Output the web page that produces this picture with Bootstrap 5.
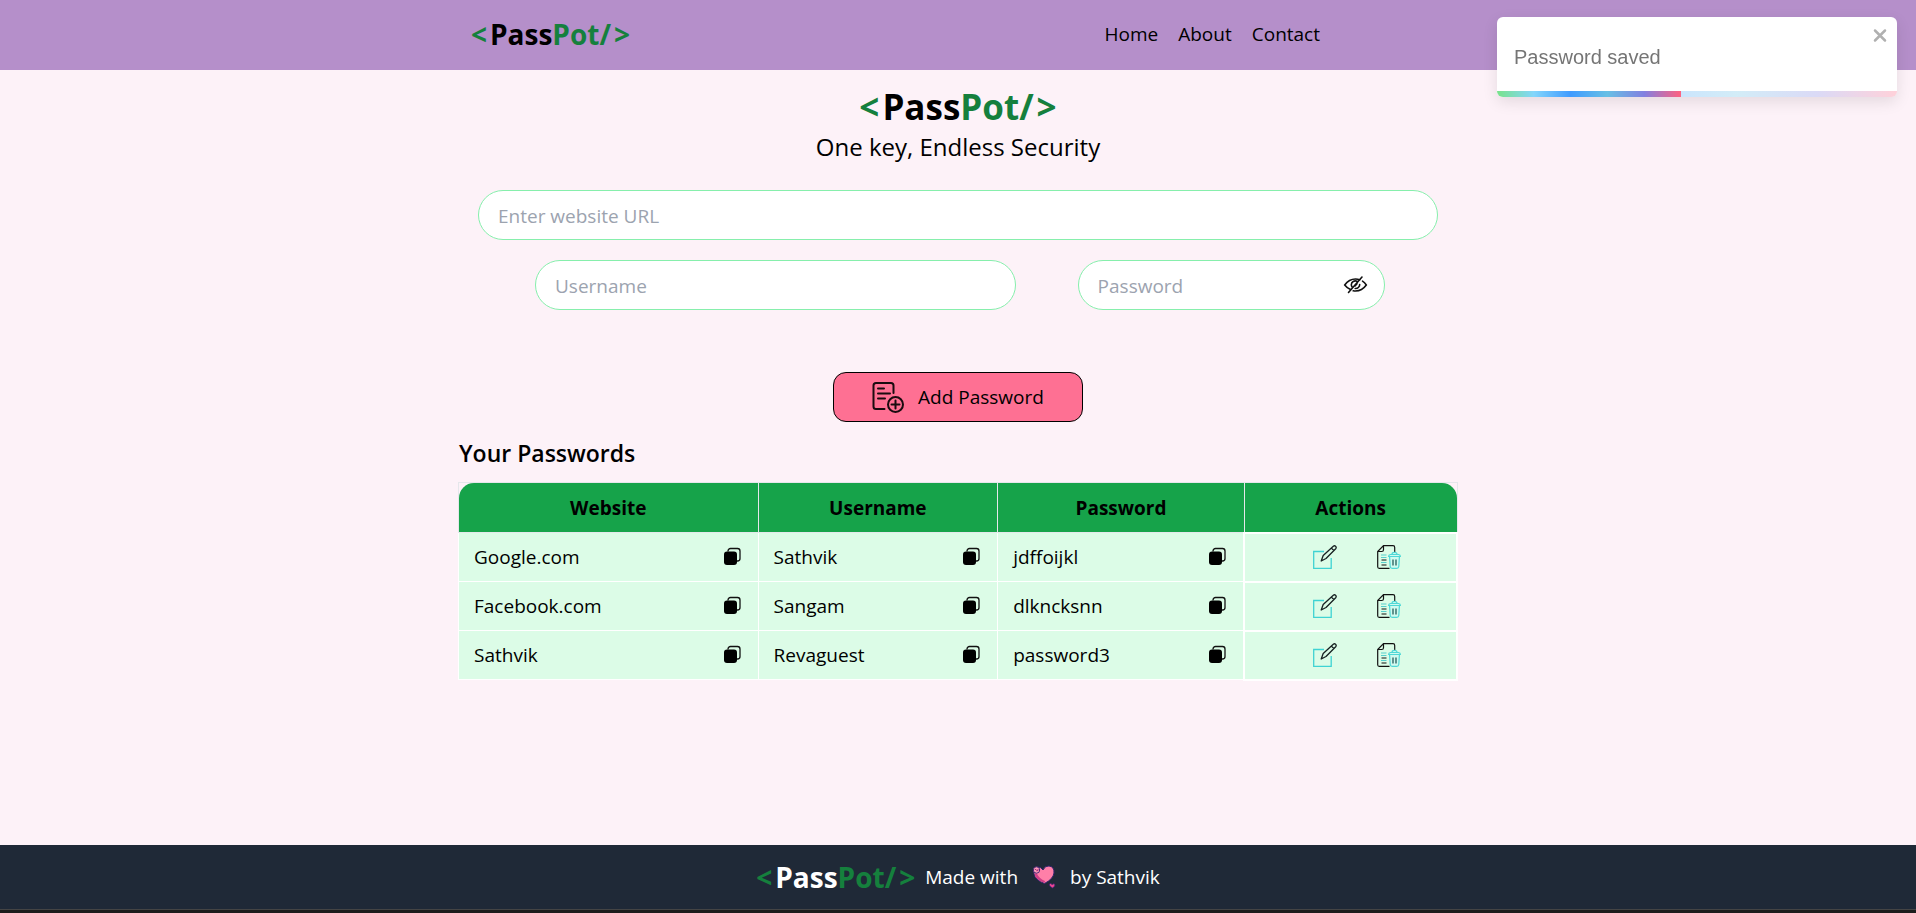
<!DOCTYPE html>
<html lang="en">
<head>
<meta charset="utf-8">
<meta name="viewport" content="width=device-width, initial-scale=1">
<title>PassPot</title>
<link href="https://cdn.jsdelivr.net/npm/bootstrap@5.3.0/dist/css/bootstrap.min.css" rel="stylesheet">
<style>
  body { font-family: "Open Sans", "Noto Sans", sans-serif; font-size: 19px; line-height: 30px; color: #000; background: #fdf2f8; }
  .page-width { width: 100%; max-width: 1000px; margin: 0 auto; }
  .site-nav { background: #b58fca; min-height: 70px; padding-bottom: 2px; }
  .site-nav .page-width { padding: 0 138px 0 13px; }
  .site-nav a { color: #000; text-decoration: none; }
  .nav-links { gap: 20px; }
  .brand { font-size: 28px; line-height: 40px; font-weight: 700; }
  .brand-green { color: #15803d; }
  .tag-open { color: #15803d; margin-right: 3px; }
  .tag-close { color: #15803d; margin-left: 3px; }
  .hero-title { font-size: 35px; line-height: 45px; font-weight: 700; margin: 14px 0 0; }
  .tagline { font-size: 24px; line-height: 35px; margin: 0 0 26px; }
  .entry-form { padding: 0 20px; }
  .pill { height: 50px; border: 1px solid #86efac; border-radius: 25px; padding: 2px 19px 0; font-size: 19px; color: #000; background: #fff; }
  .pill::placeholder { color: #9ca3af; }
  .pair { gap: 62px; padding: 0 53px 0 57px; margin-top: 20px; }
  .user-field { flex: 480 1 0; }
  .pass-field { flex: 307 1 0; }
  .eye-btn { right: 17px; top: 12px; }
  .bare-btn { border: 0; background: none; padding: 0; display: flex; color: #000; }
  .add-btn { width: 250px; height: 50px; margin-top: 62px; gap: 14px; border: 1px solid #000; border-radius: 13px; background: #fe7093; color: #000; }
  .list-title { font-size: 23px; line-height: 35px; font-weight: 600; margin: 14px 0 11px; padding-left: 1px; }
  .vault { width: 100%; table-layout: fixed; border-collapse: collapse; }
  .vault th { height: 50px; padding-top: 2px; text-align: center; font-weight: 700; background: #16a34a; border: 1px solid #e5e7eb; }
  .vault th:first-child { border-top-left-radius: 15px; }
  .vault th:last-child { border-top-right-radius: 15px; }
  .vault td { height: 49px; padding: 0 16px 0 15px; background: #dcfce7; border: 1px solid #fff; }
  .vault td.act { border: 2px solid #fff; }
  .w-site { width: 30%; } .w-user { width: 24%; } .w-pass { width: 24.7%; }
  .act-icons { gap: 40px; padding-left: 14px; }
  .site-footer { background: #1f2937; color: #fff; height: 64px; gap: 10px; }
  .bottom-strip { height: 4px; background: #1c1c1c; border-top: 1px solid #444; }
  .notice { top: 17px; right: 19px; width: 400px; height: 80px; border-radius: 6px; background: #fff; overflow: hidden; color: #757575; font-family: "Liberation Sans", Arial, sans-serif; font-size: 20px; box-shadow: 0 5px 15px rgba(0,0,0,.1); }
  .notice-text { padding: 24px 17px 0; line-height: 32px; }
  .notice-close { top: 10px; right: 10px; color: #b0b0b0; }
  .timer-track, .timer-bar { height: 6px; left: 0; bottom: 0; background: linear-gradient(to right, #4cd964, #5ac8fa, #007aff, #34aadc, #5856d6, #ff2d55); }
  .timer-track { width: 100%; opacity: .22; }
  .timer-base { height: 6px; left: 0; bottom: 0; background: #fff; }
  .timer-bar { opacity: .75; }
</style>
</head>
<body class="d-flex flex-column min-vh-100">

<svg class="d-none" aria-hidden="true">
  <symbol id="i-copy" viewBox="0 0 20 20">
    <path d="M6 4.500V4a2.500 2.500 0 0 1 2.500-2.500h7A2.500 2.500 0 0 1 18 4v7.500a2.500 2.500 0 0 1-2.500 2.500H15" fill="none" stroke="#111" stroke-width="1.300"/>
    <rect x="2" y="4.500" width="13" height="13.500" rx="3" fill="#000"/>
  </symbol>
  <symbol id="i-edit" viewBox="0 0 24 24">
    <path d="M11 6.500H.700v17h17.500V13" fill="none" stroke="#3fd3d3" stroke-width="1.300"/>
    <path d="M8.200 16l2-5.500L20.300 1.200q1.300-1 2.400.2 1 1.200 0 2.300L13 13.500 8.200 16zM18.300 3l2.600 2.600" fill="none" stroke="#162021" stroke-width="1.300" stroke-linejoin="round"/>
  </symbol>
  <symbol id="i-trash" viewBox="0 0 24 24">
    <path d="M12.500 23.300H2.200Q.700 23.300.700 21.800V6.500L6.500.700H16q1.700 0 1.700 1.700v5M.700 6.500h4q1.800 0 1.800-1.800v-4M4.500 15h5M4.500 20h5" fill="none" stroke="#111" stroke-width="1.200"/>
    <path d="M4 10h5.500M4 12.500h5.500M4 17.500h5.500" stroke="#57cfcc" stroke-width="1.100"/>
    <path d="M11.600 11.500q0-1.800 1.800-2h8.200q1.800.2 1.800 2zM15 9.300q0-2 2.500-2t2.500 2M12.600 12l.6 9.500q.2 1.800 2 1.800h4.600q1.800 0 2-1.800l.6-9.500" fill="#d0faef" stroke="#4fd8d6" stroke-width="1.200"/>
    <path d="M16 14.500v6M19 14.500v6" stroke="#174f4e" stroke-width="1.200"/>
  </symbol>
</svg>

<nav class="site-nav d-flex align-items-center">
  <div class="page-width d-flex justify-content-between align-items-center">
    <a class="brand" href="#"><span class="tag-open">&lt;</span>Pass<span class="brand-green">Pot/</span><span class="tag-close">&gt;</span></a>
    <ul class="nav-links list-unstyled d-flex mb-0">
      <li><a href="#">Home</a></li>
      <li><a href="#">About</a></li>
      <li><a href="#">Contact</a></li>
    </ul>
  </div>
</nav>

<main class="page-width flex-grow-1">
  <h1 class="hero-title text-center"><span class="tag-open">&lt;</span>Pass<span class="brand-green">Pot/</span><span class="tag-close">&gt;</span></h1>
  <p class="tagline text-center">One key, Endless Security</p>

  <form class="entry-form" onsubmit="return false">
    <input class="pill w-100" type="text" placeholder="Enter website URL" aria-label="Website URL">
    <div class="pair d-flex">
      <div class="user-field"><input class="pill w-100" type="text" placeholder="Username" aria-label="Username"></div>
      <div class="pass-field position-relative">
        <input class="pill w-100" type="password" placeholder="Password" aria-label="Password">
        <button class="bare-btn eye-btn position-absolute" type="button" aria-label="Show password">
          <svg width="25" height="25" viewBox="0 0 25 25" fill="none" stroke="#111" stroke-width="1.600" stroke-linecap="round">
            <path d="M7.500 17.600Q4 16 1.700 13q4.300-6 10.800-6 2.300 0 4.200.7M19.500 9.200q2.200 1.400 3.800 3.800-4.300 6-10.800 6-1.300 0-2.300-.2"/>
            <path d="M9.300 15.200q-1-1.200-1-2.500a4 4 0 0 1 5.700-3.400M16.700 12.500a4 4 0 0 1-4.500 4M12 14l2-2.300M5.500 20.500L19 5"/>
          </svg>
        </button>
      </div>
    </div>
    <button class="add-btn d-flex align-items-center justify-content-center mx-auto" type="submit">
      <svg width="32" height="32" viewBox="0 0 32 32" fill="none" stroke="#190b0f" stroke-width="2" stroke-linecap="round">
        <path d="M12.500 28H4q-2.500 0-2.500-2.500v-21Q1.500 2 4 2h15q2.500 0 2.500 2.500V12M6 7.500h6M6 12.500h12M6 17.500h7"/>
        <circle cx="23.500" cy="23.500" r="7.500"/><path d="M23.500 19.500v8M19.500 23.500h8"/>
      </svg>
      <span>Add Password</span>
    </button>
  </form>

  <h2 class="list-title">Your Passwords</h2>
  <table class="vault">
    <colgroup><col class="w-site"><col class="w-user"><col class="w-pass"><col></colgroup>
    <thead><tr><th>Website</th><th>Username</th><th>Password</th><th>Actions</th></tr></thead>
    <tbody id="rows"></tbody>
  </table>
</main>

<footer>
  <div class="site-footer d-flex justify-content-center align-items-center">
    <span class="brand"><span class="tag-open">&lt;</span>Pass<span class="brand-green">Pot/</span><span class="tag-close">&gt;</span></span>
    <span>Made with</span>
    <svg class="mx-1" width="24" height="24" viewBox="0 0 24 24" role="img" aria-label="love">
      <path d="M12.500 18.500Q3 15 2 8.500 1 2.500 6 2q3 0 5 3 2-4.500 6-4 5.500.8 5 7-.8 6-9.500 10.500z" fill="#ff7fa8" stroke="#33246f" stroke-width="1"/>
      <path d="M12.500 18Q3.500 14.500 2.500 9l2-1q3 6 8.500 8z" fill="#cf3f87"/>
      <circle cx="4.500" cy="5" r="3.200" fill="#ff9cb8" stroke="#4b2a75" stroke-width="1"/>
      <path d="M2.800 4.500h1.500M4.500 6l2-1.500" stroke="#a62e7d" stroke-width="1.200"/>
      <path d="M20.500 23q-3.300-1.500-3.200-3.500 1.200-2 2.800 0 2-1.500 3 .3-.1 1.900-2.600 3.200z" fill="#ef4592" stroke="#33246f" stroke-width=".8"/>
    </svg>
    <span>by Sathvik</span>
  </div>
  <div class="bottom-strip"></div>
</footer>

<div class="notice position-fixed" role="status">
  <div class="notice-text">Password saved</div>
  <button class="bare-btn notice-close position-absolute" type="button" aria-label="Close">
    <svg width="14" height="16" viewBox="0 0 14 16"><path d="M2 3.500l10 10M12 3.500l-10 10" stroke="currentColor" stroke-width="2.500" stroke-linecap="round"/></svg>
  </button>
  <div class="timer-track position-absolute"></div>
  <div class="timer-base position-absolute" style="width:46%"></div>
  <div class="timer-bar position-absolute" style="width:46%"></div>
</div>

<script src="https://cdn.jsdelivr.net/npm/bootstrap@5.3.0/dist/js/bootstrap.bundle.min.js"></script>
<script>
  const entries = [
    ["Google.com", "Sathvik", "jdffoijkl"],
    ["Facebook.com", "Sangam", "dlkncksnn"],
    ["Sathvik", "Revaguest", "password3"]
  ];
  const iconButton = (id, size, label) =>
    `<button class="bare-btn" type="button" aria-label="${label}"><svg width="${size}" height="${size}"><use href="#${id}"/></svg></button>`;
  document.getElementById("rows").innerHTML = entries.map(e =>
    "<tr>" + e.map(t => `<td><div class="d-flex justify-content-between align-items-center"><span>${t}</span>${iconButton("i-copy", 20, "Copy")}</div></td>`).join("") +
    `<td class="act"><div class="act-icons d-flex justify-content-center">${iconButton("i-edit", 24, "Edit")}${iconButton("i-trash", 24, "Delete")}</div></td></tr>`
  ).join("");
</script>
</body>
</html>
